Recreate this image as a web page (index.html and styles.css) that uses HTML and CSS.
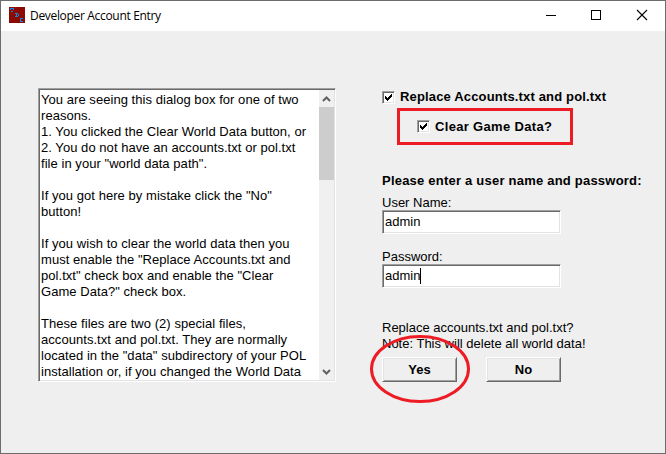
FILE: index.html
```html
<!DOCTYPE html>
<html lang="en">
<head>
<meta charset="utf-8">
<title>Developer Account Entry</title>
<link rel="stylesheet" href="styles.css">
</head>
<body>
<div class="window">
  <header class="titlebar">
    <svg class="app-icon" width="16" height="16" viewBox="0 0 16 16" shape-rendering="crispEdges">
      <rect width="16" height="16" fill="#8b0a04"/>
      <path fill="#1488e0" d="M1 1h4v1h-4zM1 2h1v1h-1zM4 2h1v1h-1zM2 4h2v1h-2zM6 6h3v1h-3zM7 7h1v3h-1zM9 7h1v2h-1zM6 9h3v1h-3zM11 11h3v1h-3zM11 12h1v3h-1zM12 14h2v1h-2z"/>
    </svg>
    <h1 class="title">Developer Account Entry</h1>
    <svg class="controls" width="138" height="30" viewBox="0 0 138 30" fill="none" stroke="#000">
      <path d="M19 14.500h10" shape-rendering="crispEdges"/>
      <rect x="64.500" y="9.500" width="9" height="9" shape-rendering="crispEdges"/>
      <path d="M110 9l10 10M120 9l-10 10" stroke-width="1.100"/>
    </svg>
  </header>
  <main class="content">
    <section class="info sunken">
      <div class="info-text">
        <p>You are seeing this dialog box for one of two<br>reasons.<br>1. You clicked the Clear World Data button, or<br>2. You do not have an accounts.txt or pol.txt<br>file in your "world data path".</p>
        <p>If you got here by mistake click the "No"<br>button!</p>
        <p>If you wish to clear the world data then you<br>must enable the "Replace Accounts.txt and<br>pol.txt" check box and enable the "Clear<br>Game Data?" check box.</p>
        <p>These files are two (2) special files,<br>accounts.txt and pol.txt. They are normally<br>located in the "data" subdirectory of your POL<br>installation or, if you changed the World Data</p>
      </div>
      <div class="scrollbar">
        <svg width="15" height="17" viewBox="0 0 15 17"><path d="M4 11l3.500-3.500L11 11" fill="none" stroke="#606060" stroke-width="2"/></svg>
        <div class="thumb"></div>
        <svg class="down" width="15" height="17" viewBox="0 0 15 17"><path d="M4 7l3.500 3.500L11 7" fill="none" stroke="#606060" stroke-width="2"/></svg>
      </div>
    </section>
    <section class="form">
      <div class="check-row">
        <span class="check sunken"><svg width="9" height="9" viewBox="0 0 9 9" shape-rendering="crispEdges"><path d="M1 3v3h1v1h1v1h1v-1h1v-1h1v-1h1v-1h1v-3h-1v1h-1v1h-1v1h-1v1h-1v-1h-1v-1z"/></svg></span>
        <b class="replace-label">Replace Accounts.txt and pol.txt</b>
      </div>
      <div class="check-row highlighted">
        <span class="check sunken"><svg width="9" height="9" viewBox="0 0 9 9" shape-rendering="crispEdges"><path d="M1 3v3h1v1h1v1h1v-1h1v-1h1v-1h1v-1h1v-3h-1v1h-1v1h-1v1h-1v1h-1v-1h-1v-1z"/></svg></span>
        <b class="clear-label">Clear Game Data?</b>
      </div>
      <b class="prompt">Please enter a user name and password:</b>
      <div class="field"><span>User Name:</span><div class="input sunken">admin</div></div>
      <div class="field"><span>Password:</span><div class="input sunken">admin<i class="caret"></i></div></div>
      <p class="question">Replace accounts.txt and pol.txt?<br>Note: This will delete all world data!</p>
      <div class="buttons">
        <div class="button">Yes
          <svg class="ring" width="102" height="70" viewBox="0 0 102 70"><ellipse cx="51" cy="35" rx="48.500" ry="32.500" fill="none" stroke="#ed1c24" stroke-width="3"/></svg>
        </div>
        <div class="button">No</div>
      </div>
    </section>
  </main>
</div>
</body>
</html>
```
FILE: styles.css
```css
* { box-sizing: border-box; }
body { margin: 0; }
p, h1 { margin: 0; }
.window {
  width: 666px;
  height: 454px;
  border: 1px solid #6c6c6c;
  background: #efefef;
  color: #000;
  font: 13px/16px "Liberation Sans", Arial, sans-serif;
  white-space: nowrap;
  overflow: hidden;
}
.titlebar {
  display: flex;
  height: 30px;
  padding-left: 8px;
  background: #fff;
}
.app-icon { margin-top: 6px; }
.title {
  flex: 1;
  margin-left: 5px;
  font: 12px/29px "Open Sans", sans-serif;
  letter-spacing: -0.32px;
}
.content {
  display: flex;
  gap: 46px;
  padding: 57px 0 0 37px;
}
.sunken {
  border: 1px solid;
  border-color: #a0a0a0 #fff #fff #a0a0a0;
  box-shadow: inset 1px 1px #696969, inset -1px -1px #e3e3e3;
  background: #fff;
}
.info {
  display: flex;
  width: 298px;
  height: 294px;
  padding: 1px;
}
.info-text { flex: 1; padding: 2px 0 0 1px; letter-spacing: 0.05px; }
.info-text p + p { margin-top: 16px; }
.scrollbar {
  display: flex;
  flex-direction: column;
  width: 15px;
  background: #f0f0f0;
}
.scrollbar svg { flex: none; }
.thumb { height: 73px; background: #cdcdcd; }
.down { margin-top: auto; }
.form { width: 270px; }
.check-row { display: flex; align-items: center; height: 18px; gap: 5px; }
.check { width: 13px; height: 13px; padding: 1px; }
.check svg { display: block; }
.replace-label { letter-spacing: 0.16px; }
.clear-label { letter-spacing: 0.33px; }
.highlighted {
  width: 176px;
  height: 37px;
  margin: 2px 0 0 15px;
  padding-left: 17px;
  border: 3px solid #ed1c24;
}
.prompt { display: block; margin: 28px 0 6px; letter-spacing: 0.22px; }
.field { height: 54px; }
.field span { display: block; height: 15px; }
.input {
  display: flex;
  align-items: center;
  width: 179px;
  height: 24px;
  padding: 0 0 1px 2px;
}
.caret { width: 1px; height: 16px; background: #000; }
.question { margin-top: 17px; }
.buttons { display: flex; gap: 29px; margin-top: 5px; }
.button {
  position: relative;
  width: 75px;
  height: 25px;
  border: 1px solid;
  border-color: #fff #696969 #696969 #fff;
  box-shadow: inset 1px 1px #e3e3e3, inset -1px -1px #a0a0a0;
  font-weight: bold;
  line-height: 23px;
  text-align: center;
}
.ring { position: absolute; left: -14px; top: -24px; }
```
